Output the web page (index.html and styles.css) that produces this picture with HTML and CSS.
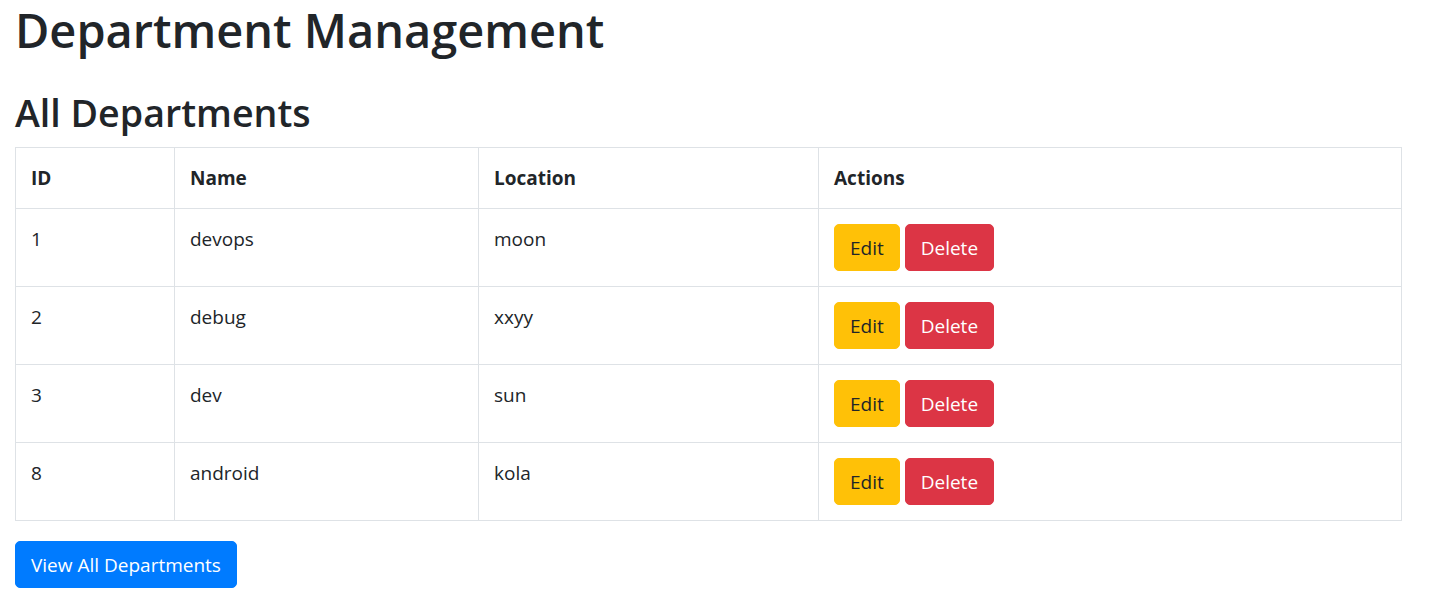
FILE: index.html
```html
<!DOCTYPE html>
<html lang="en">
<head>
<meta charset="utf-8">
<title>Department Management</title>
<link rel="stylesheet" href="styles.css">
</head>
<body>
<div class="container">
  <h1 class="page-title">Department Management</h1>
  <h2 class="section-title">All Departments</h2>
  <table class="dept-table">
    <colgroup>
      <col class="col-id">
      <col class="col-name">
      <col class="col-loc">
      <col class="col-actions">
    </colgroup>
    <thead>
      <tr><th>ID</th><th>Name</th><th>Location</th><th>Actions</th></tr>
    </thead>
    <tbody>
      <tr><td>1</td><td>devops</td><td>moon</td><td><button class="btn btn-warning">Edit</button> <button class="btn btn-danger">Delete</button></td></tr>
      <tr><td>2</td><td>debug</td><td>xxyy</td><td><button class="btn btn-warning">Edit</button> <button class="btn btn-danger">Delete</button></td></tr>
      <tr><td>3</td><td>dev</td><td>sun</td><td><button class="btn btn-warning">Edit</button> <button class="btn btn-danger">Delete</button></td></tr>
      <tr><td>8</td><td>android</td><td>kola</td><td><button class="btn btn-warning">Edit</button> <button class="btn btn-danger">Delete</button></td></tr>
    </tbody>
  </table>
  <button class="btn btn-primary">View All Departments</button>
</div>
</body>
</html>
```

FILE: styles.css
```css
html, body {
  margin: 0;
  padding: 0;
  background: #fff;
}
body {
  font-family: "Open Sans", "Noto Sans", "Liberation Sans", sans-serif;
  font-size: 19px;
  line-height: 30px;
  color: #212529;
}
.container {
  padding: 0 15px;
}
.page-title {
  font-size: 46.9px;
  font-weight: 600;
  line-height: 60px;
  margin: 0 0 10px 0;
}
.section-title {
  font-size: 37.6px;
  font-weight: 600;
  line-height: 48px;
  margin: 29px 0 10px 0;
}
.dept-table {
  width: 1387px;
  border-collapse: collapse;
  table-layout: fixed;
  margin-bottom: 20px;
}
.col-id { width: 159px; }
.col-name { width: 304px; }
.col-loc { width: 340px; }
.col-actions { width: 583px; }
.dept-table th,
.dept-table td {
  border: 1px solid #dee2e6;
  padding: 15px;
  text-align: left;
  vertical-align: top;
}
.dept-table th {
  font-weight: 700;
}
.btn {
  display: inline-block;
  font-family: inherit;
  font-size: 19px;
  line-height: 30px;
  padding: 7.5px 15px;
  border: 1px solid transparent;
  border-radius: 5px;
  cursor: pointer;
  vertical-align: middle;
}
.btn-warning {
  background: #ffc107;
  border-color: #ffc107;
  color: #212529;
}
.btn-danger {
  background: #dc3545;
  border-color: #dc3545;
  color: #fff;
}
.btn-primary {
  background: #007bff;
  border-color: #007bff;
  color: #fff;
}
```
